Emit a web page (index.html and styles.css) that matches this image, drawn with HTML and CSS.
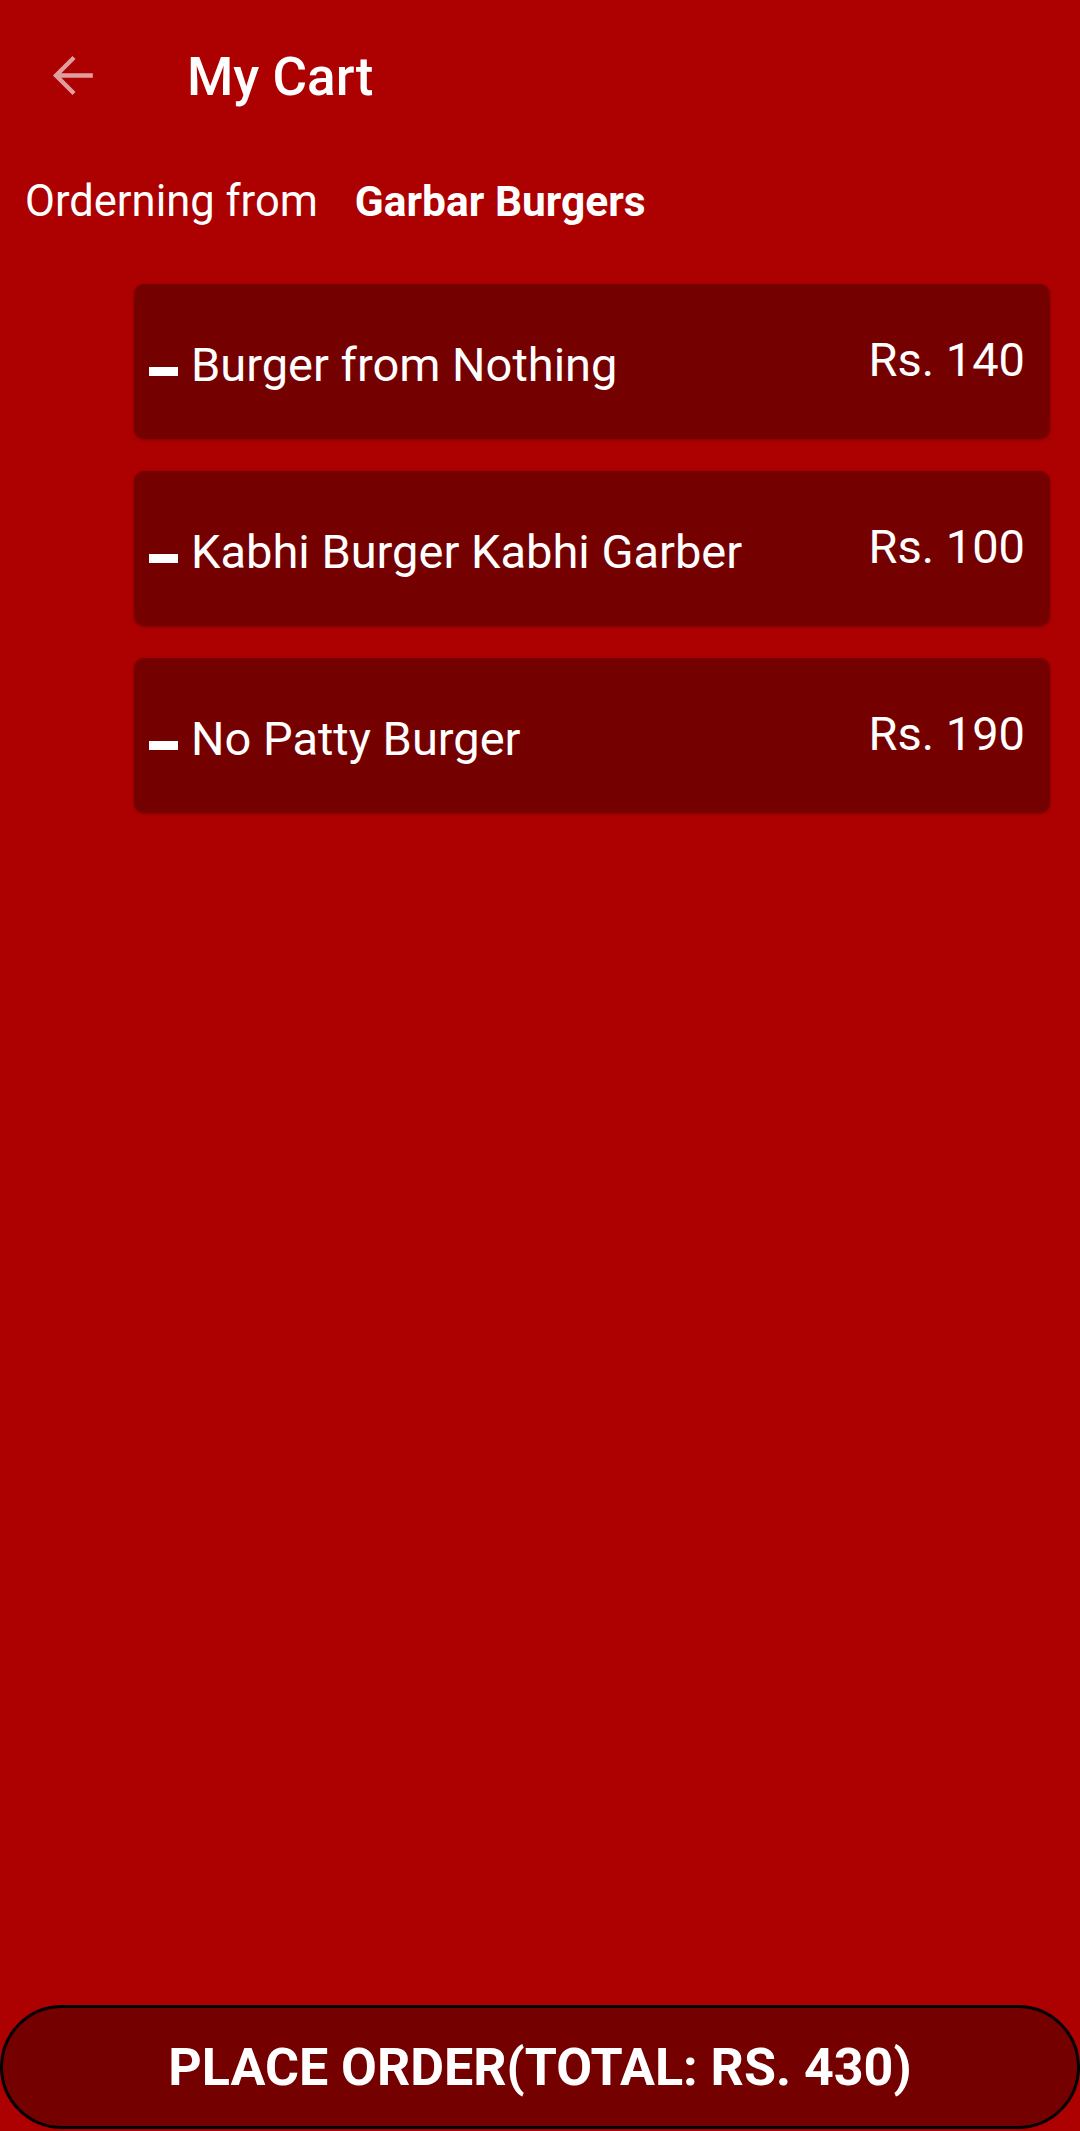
FILE: index.html
```html
<!DOCTYPE html>
<html>
<head>
<meta charset="utf-8">
<link rel="stylesheet" href="styles.css">
</head>
<body>
<div class="app">
  <header class="toolbar">
    <svg class="back" viewBox="0 0 24 24" width="61" height="61"><path d="M20 11.1H7.6l5.6-5.6L12 4.3 4.3 12l7.7 7.7 1.2-1.2-5.6-5.6H20v-1.8z" fill="currentColor"/></svg>
    <h1 class="title">My Cart</h1>
  </header>
  <div class="from">
    <span class="from-label">Orderning from</span>
    <span class="from-name">Garbar Burgers</span>
  </div>
  <div class="list">
    <div class="card">
      <span class="dash"></span>
      <span class="name">Burger from Nothing</span>
      <span class="price">Rs. 140</span>
    </div>
    <div class="card">
      <span class="dash"></span>
      <span class="name">Kabhi Burger Kabhi Garber</span>
      <span class="price">Rs. 100</span>
    </div>
    <div class="card">
      <span class="dash"></span>
      <span class="name">No Patty Burger</span>
      <span class="price">Rs. 190</span>
    </div>
  </div>
  <div class="spacer"></div>
  <button class="order">PLACE ORDER(TOTAL: RS. 430)</button>
</div>
</body>
</html>
```
FILE: styles.css
```css
html, body {
  margin: 0;
  padding: 0;
  background: #ad0000;
}
body {
  font-family: Roboto, "Noto Sans", sans-serif;
  color: #ffffff;
}
.app {
  height: 2131px;
  display: flex;
  flex-direction: column;
  box-sizing: border-box;
  padding-bottom: 2px;
}
.toolbar {
  height: 154px;
  display: flex;
  align-items: center;
  padding-left: 42px;
}
.back {
  color: rgba(255, 255, 255, 0.62);
  display: block;
  margin-top: -4px;
}
.title {
  margin: 0 0 0 84px;
  font-size: 53px;
  line-height: 64px;
  font-weight: 500;
}
.from {
  display: flex;
  align-items: baseline;
  padding: 22px 0 0 25px;
  line-height: 52px;
}
.from-label {
  font-weight: 400;
  font-size: 43.5px;
}
.from-name {
  font-weight: 700;
  font-size: 42.5px;
  margin-left: 37px;
}
.list {
  margin-top: 56px;
  display: flex;
  flex-direction: column;
  gap: 32px;
}
.card {
  margin-left: 134px;
  width: 916px;
  height: 155px;
  box-sizing: border-box;
  background: #750000;
  border-radius: 10px;
  display: flex;
  align-items: center;
  padding: 6px 25px 0 15px;
  box-shadow: 0 1px 3px rgba(0, 0, 0, 0.25);
}
.dash {
  width: 29px;
  height: 9px;
  background: #ffffff;
  margin-top: 14px;
  margin-right: 13px;
  flex: none;
}
.name {
  font-size: 47px;
  line-height: 56px;
  flex: 1;
}
.price {
  font-size: 47px;
  line-height: 56px;
  margin-bottom: 10px;
}
.spacer {
  flex: 1;
}
.order {
  height: 124px;
  width: 1080px;
  margin: 0;
  border: 3px solid #000000;
  border-radius: 62px;
  background: #750000;
  color: #ffffff;
  font-family: Roboto, "Noto Sans", sans-serif;
  font-weight: 700;
  font-size: 52px;
  padding: 0;
}
```
